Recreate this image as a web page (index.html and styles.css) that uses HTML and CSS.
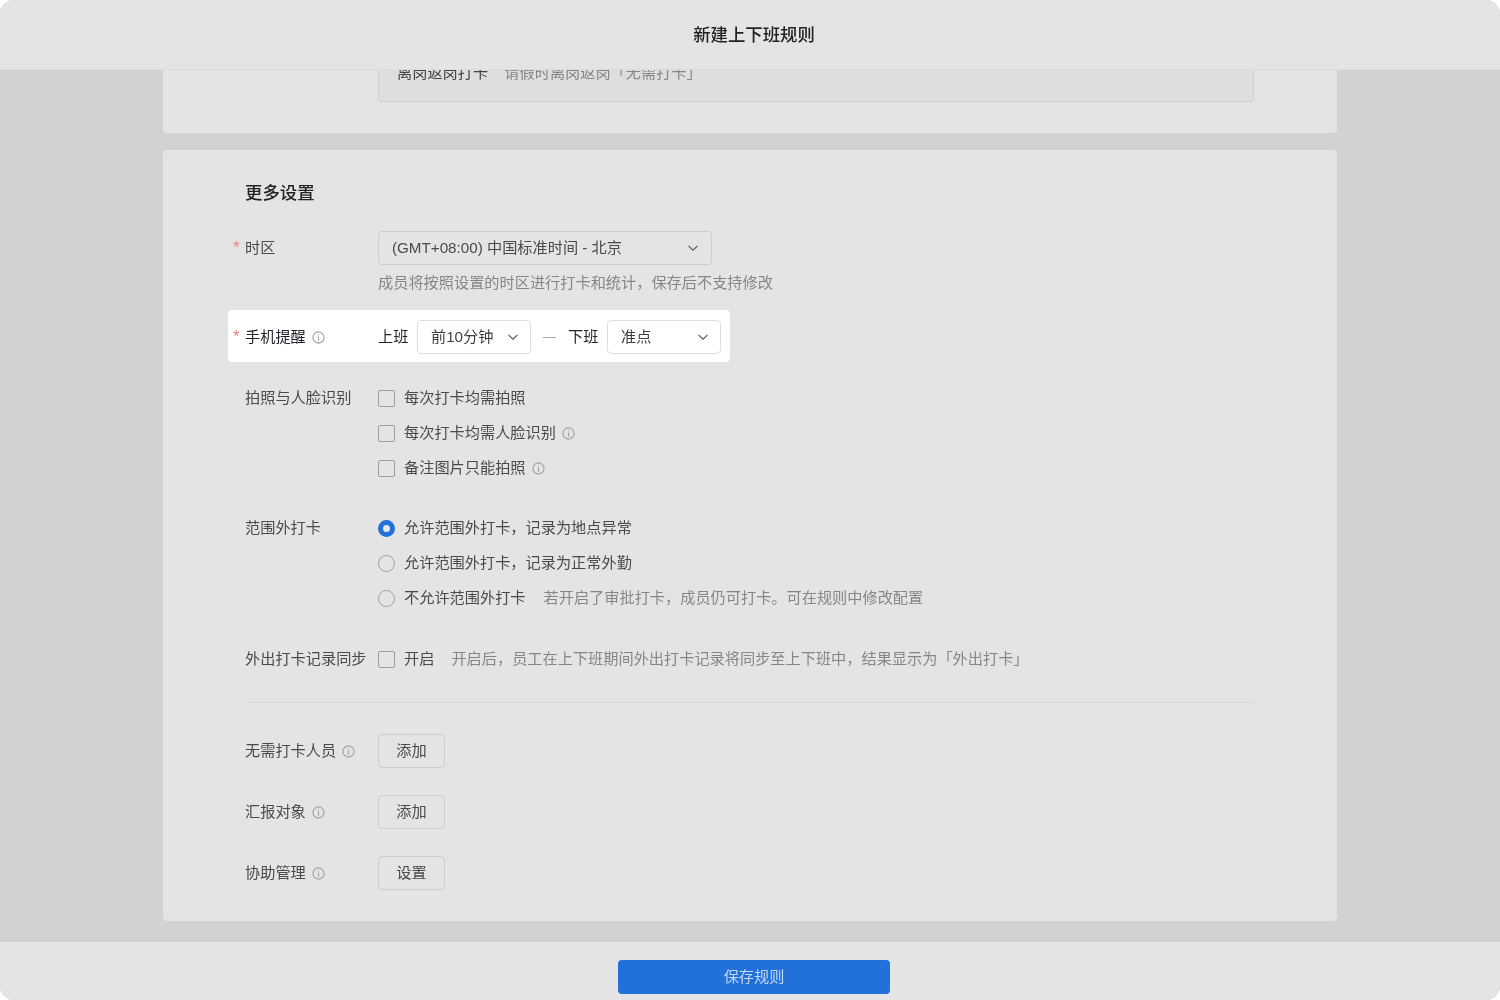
FILE: index.html
```html
<!DOCTYPE html>
<html lang="zh-CN">
<head>
  <meta charset="UTF-8" />
  <title>新建上下班规则</title>
  <link rel="stylesheet" href="styles.css">
</head>
<body>
  <div class="page">
    <header class="top-bar">新建上下班规则</header>

    <main class="content">
      <section class="card card-clipped">
        <div class="leave-box">
          <span class="leave-name">离岗返岗打卡</span>
          <span class="hint">请假时离岗返岗「无需打卡」</span>
        </div>
      </section>

      <section class="card card-more">
        <h2 class="card-title">更多设置</h2>

        <div class="row row-timezone">
          <div class="label required">时区</div>
          <div class="select select-timezone">
            <span>(GMT+08:00) 中国标准时间 - 北京</span>
            <svg class="chevron" viewBox="0 0 12 12"><path d="M1.5 3.8 6 8.2l4.5-4.4"/></svg>
          </div>
        </div>
        <div class="row-hint hint">成员将按照设置的时区进行打卡和统计，保存后不支持修改</div>

        <div class="row row-phone">
          <div class="label required">手机提醒
            <svg class="info" viewBox="0 0 14 14"><circle cx="7" cy="7" r="6"/><path d="M7 6v4.4M7 3.4v1.3"/></svg>
          </div>
          <span class="phone-text">上班</span>
          <div class="select select-phone">
            <span>前10分钟</span>
            <svg class="chevron" viewBox="0 0 12 12"><path d="M1.5 3.8 6 8.2l4.5-4.4"/></svg>
          </div>
          <span class="dash"></span>
          <span class="phone-text">下班</span>
          <div class="select select-phone">
            <span>准点</span>
            <svg class="chevron" viewBox="0 0 12 12"><path d="M1.5 3.8 6 8.2l4.5-4.4"/></svg>
          </div>
        </div>

        <div class="row row-options row-photo">
          <div class="label">拍照与人脸识别</div>
          <div class="options">
            <div class="option"><span class="check"></span>每次打卡均需拍照</div>
            <div class="option"><span class="check"></span>每次打卡均需人脸识别
              <svg class="info" viewBox="0 0 14 14"><circle cx="7" cy="7" r="6"/><path d="M7 6v4.4M7 3.4v1.3"/></svg>
            </div>
            <div class="option"><span class="check"></span>备注图片只能拍照
              <svg class="info" viewBox="0 0 14 14"><circle cx="7" cy="7" r="6"/><path d="M7 6v4.4M7 3.4v1.3"/></svg>
            </div>
          </div>
        </div>

        <div class="row row-options row-range">
          <div class="label">范围外打卡</div>
          <div class="options">
            <div class="option"><span class="radio radio-on"></span>允许范围外打卡，记录为地点异常</div>
            <div class="option"><span class="radio"></span>允许范围外打卡，记录为正常外勤</div>
            <div class="option"><span class="radio"></span>不允许范围外打卡<span class="hint hint-side">若开启了审批打卡，成员仍可打卡。可在规则中修改配置</span></div>
          </div>
        </div>

        <div class="row row-sync">
          <div class="label">外出打卡记录同步</div>
          <div class="option"><span class="check"></span>开启<span class="hint hint-side">开启后，员工在上下班期间外出打卡记录将同步至上下班中，结果显示为「外出打卡」</span></div>
        </div>

        <hr class="divider" />

        <div class="row row-action">
          <div class="label">无需打卡人员
            <svg class="info" viewBox="0 0 14 14"><circle cx="7" cy="7" r="6"/><path d="M7 6v4.4M7 3.4v1.3"/></svg>
          </div>
          <button class="btn">添加</button>
        </div>
        <div class="row row-action">
          <div class="label">汇报对象
            <svg class="info" viewBox="0 0 14 14"><circle cx="7" cy="7" r="6"/><path d="M7 6v4.4M7 3.4v1.3"/></svg>
          </div>
          <button class="btn">添加</button>
        </div>
        <div class="row row-action">
          <div class="label">协助管理
            <svg class="info" viewBox="0 0 14 14"><circle cx="7" cy="7" r="6"/><path d="M7 6v4.4M7 3.4v1.3"/></svg>
          </div>
          <button class="btn">设置</button>
        </div>
      </section>
    </main>

    <footer class="bottom-bar">
      <button class="btn-save">保存规则</button>
    </footer>
  </div>
</body>
</html>
```

FILE: styles.css
```css
* {
  box-sizing: border-box;
}

body {
  margin: 0;
  background: #fff;
  color: #4a4a4a;
  font-family: "Liberation Sans", "Noto Sans CJK SC", sans-serif;
  font-size: 15.2px;
  line-height: 20px;
}

.page {
  display: flex;
  flex-direction: column;
  height: 1000px;
  background: #d1d3d2;
  border-radius: 14px;
  overflow: hidden;
  filter: blur(0.3px);
}

.top-bar {
  flex: none;
  height: 70px;
  padding-left: 8px;
  background: #e4e4e4;
  border-bottom: 1px solid #dcdddc;
  color: #222;
  font-size: 17.4px;
  font-weight: 500;
  line-height: 70px;
  text-align: center;
}

.content {
  flex: 1;
  display: flex;
  flex-direction: column;
  align-items: center;
  gap: 17px;
  overflow: hidden;
}

.card {
  width: 1174px;
  background: #e4e4e4;
  border-radius: 4px;
  flex: none;
}

/* first card is scrolled under the header */
.card-clipped {
  display: flex;
  flex-direction: column;
  justify-content: flex-end;
  height: 63px;
  padding: 0 83px 31px 215px;
  border-radius: 0 0 4px 4px;
  overflow: hidden;
}

.leave-box {
  flex: none;
  height: 60px;
  padding: 20px 18px 0;
  background: #dedede;
  border: 1px solid #cfd0cf;
  border-radius: 4px;
}

.leave-name {
  margin-right: 12px;
  color: #444;
}

.card-more {
  height: 771px;
  padding: 31px 83px 0 82px;
}

.card-title {
  margin: 0;
  color: #222;
  font-size: 17.4px;
  font-weight: 500;
  line-height: 25px;
}

.row {
  display: flex;
  align-items: center;
}

.label {
  position: relative;
  display: flex;
  align-items: center;
  gap: 6px;
  flex: none;
  width: 133px;
  white-space: nowrap;
}

.required::before {
  content: "*";
  position: absolute;
  left: -12px;
  top: 0;
  color: #e8837c;
  font-size: 17px;
}

.hint {
  color: #868686;
}

.row-timezone {
  margin-top: 25px;
}

.select {
  display: flex;
  align-items: center;
  justify-content: space-between;
  height: 34px;
  padding: 0 12px 0 13px;
  background: #e4e4e4;
  border: 1px solid #cbcccb;
  border-radius: 4px;
  color: #4a4a4a;
}

.select-timezone {
  width: 334px;
}

.chevron {
  width: 12px;
  height: 12px;
  fill: none;
  stroke: #555;
  stroke-width: 1.1;
}

.row-hint {
  margin: 7px 0 0 133px;
  line-height: 22px;
}

.row-phone {
  width: 502px;
  height: 52px;
  margin: 16px 0 0 -17px;
  padding: 2px 0 0 17px;
  background: #fff;
  border-radius: 4px;
  color: #1f2329;
}

.row-phone .label {
  color: #1f2329;
}

.row-phone .select {
  width: 114px;
  padding-right: 11px;
  background: #fff;
  border-color: #dcdee0;
  color: #3a3f45;
}

.phone-text {
  margin-right: 8.6px;
}

.dash {
  width: 13px;
  height: 1px;
  margin: 0 12px;
  background: #a8a8a8;
}

.row-options {
  align-items: flex-start;
}

.row-options .label {
  height: 22px;
}

.row-photo {
  margin-top: 25px;
}

.row-range {
  margin-top: 38px;
}

.options {
  display: flex;
  flex-direction: column;
  gap: 13px;
}

.option {
  display: flex;
  align-items: center;
  height: 22px;
  white-space: nowrap;
}

.option .info {
  margin-left: 6px;
}

.check,
.radio {
  flex: none;
  width: 17px;
  height: 17px;
  margin-right: 9px;
  border: 1px solid #9d9d9d;
  border-radius: 2px;
}

.radio {
  border-radius: 50%;
}

.radio-on {
  border: 5.5px solid #2270d9;
  background: #e8e8e8;
}

.hint-side {
  margin-left: 18px;
}

.row-sync .hint-side {
  margin-left: 17px;
}

.row-sync {
  margin-top: 39px;
}

.divider {
  height: 1px;
  margin: 32px 0 0;
  background: #d6d7d6;
  border: 0;
}

.row-action {
  height: 34px;
  margin-top: 27px;
}

.divider + .row-action {
  margin-top: 31px;
}

.btn {
  width: 67px;
  height: 34px;
  padding: 0;
  background: #e4e4e4;
  border: 1px solid #cbcccb;
  border-radius: 4px;
  color: #4a4a4a;
  font: inherit;
}

.info {
  flex: none;
  width: 13px;
  height: 13px;
  fill: none;
  stroke: #a0a0a0;
  stroke-width: 1.2;
}

.bottom-bar {
  display: flex;
  justify-content: center;
  flex: none;
  height: 58px;
  padding: 18px 0 0 8px;
  background: #e4e4e4;
}

.btn-save {
  width: 272px;
  height: 34px;
  background: #2270d9;
  border: 0;
  border-radius: 4px;
  color: #c5d8f2;
  font: inherit;
}
```
